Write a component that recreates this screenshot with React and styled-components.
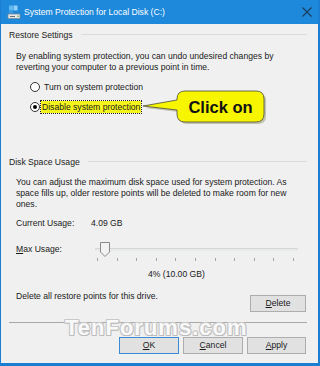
import React from 'react';
import styled, { createGlobalStyle } from 'styled-components';

const GlobalStyle = createGlobalStyle`
  html, body {
    margin: 0;
    padding: 0;
    background: #f0f0f0;
  }
  body {
    font-family: "Liberation Sans", Arial, sans-serif;
    font-size: 8.6px;
    color: #1a1a1a;
  }
`;

// WINDOW FRAME
const Window = styled.div`
  position: relative;
  width: 320px;
  height: 366px;
  box-sizing: border-box;
  border-style: solid;
  border-color: #1a7fd0;
  border-width: 0 2px 3px 1px;
  background: #f0f0f0;
  display: flex;
  flex-direction: column;
  overflow: hidden;
`;

const TitleBar = styled.div`
  height: 24px;
  flex: none;
  background: #1e88da;
  display: flex;
  align-items: center;
  padding: 0 6px 0 6px;
  color: #fff;
`;

const TitleText = styled.span`
  margin-left: 3px;
  flex: 1;
  line-height: 12px;
`;

const Body = styled.div`
  flex: 1;
  display: flex;
  flex-direction: column;
  padding: 0 11px 0 8px;
`;

// GROUP BOX HEADERS
const GroupHeader = styled.div`
  display: flex;
  align-items: center;
  gap: 8px;
  margin-top: ${p => p.$top}px;
  line-height: 12px;
  height: 12px;
`;

const Rule = styled.div`
  flex: 1;
  height: 1px;
  background: #dcdcdc;
  margin-top: -1px;
`;

const Para = styled.div`
  margin: ${p => p.$top}px 0 0 7px;
  line-height: 11px;
  white-space: nowrap;
`;

// RADIOS
const RadioRow = styled.div`
  position: relative;
  display: flex;
  align-items: center;
  height: 14px;
  margin: ${p => p.$top}px 0 0 21px;
`;

const RadioCircle = styled.span`
  width: 10px;
  height: 10px;
  box-sizing: border-box;
  border-radius: 50%;
  border: 1px solid #333;
  background: #fff;
  display: flex;
  align-items: center;
  justify-content: center;
  flex: none;

  &::after {
    content: '';
    width: 4px;
    height: 4px;
    border-radius: 50%;
    background: ${p => (p.$checked ? '#000' : 'transparent')};
  }
`;

const RadioLabel = styled.span`
  margin-left: ${p => (p.$focused ? 1 : 3)}px;
  line-height: 12px;
  padding: 0 1px;
  background: ${p => (p.$focused ? '#f4f41c' : 'transparent')};
  outline: ${p => (p.$focused ? '1px dotted #222' : 'none')};
`;

const CalloutSvg = styled.svg`
  position: absolute;
  left: 111px;
  top: -12px;
  overflow: visible;
`;

// USAGE ROWS
const InfoRow = styled.div`
  display: flex;
  align-items: flex-start;
  margin: ${p => p.$top}px 0 0 7px;
  line-height: 12px;
`;

const InfoLabel = styled.span`
  width: 75px;
  flex: none;
  margin-top: ${p => p.$offset || 0}px;
`;

const SliderBox = styled.div`
  position: relative;
  width: 203px;
  height: 22px;
  margin-left: 4px;
`;

const Track = styled.div`
  position: absolute;
  left: 0;
  right: 0;
  top: 7px;
  height: 2px;
  background: #e7eaea;
  border-top: 1px solid #d6d6d6;
`;

const Thumb = styled.svg`
  position: absolute;
  left: 5px;
  top: 1px;
`;

const Ticks = styled.div`
  position: absolute;
  left: 2px;
  right: 4px;
  top: 17px;
  display: flex;
  justify-content: space-between;
`;

const Tick = styled.span`
  width: 1px;
  height: 3px;
  background: #a4a4a4;
`;

const Percent = styled.div`
  margin: 5px 0 0 139px;
  line-height: 12px;
`;

const DeleteRow = styled.div`
  display: flex;
  justify-content: space-between;
  align-items: flex-start;
  margin: 10px 0 0 7px;
  line-height: 12px;
`;

const Button = styled.button`
  font: inherit;
  color: #1a1a1a;
  height: 17px;
  width: ${p => p.$w}px;
  padding: 0;
  box-sizing: border-box;
  background: #e1e1e1;
  border: 1px solid ${p => (p.$primary ? '#3a8ad6' : '#adadad')};
  margin-top: ${p => p.$top || 0}px;
  margin-right: ${p => p.$right || 0}px;
  line-height: 15px;
`;

const Separator = styled.div`
  height: 1px;
  background: #a8a8a8;
  margin-top: 10px;
`;

const ButtonBar = styled.div`
  display: flex;
  justify-content: flex-end;
  gap: 4px;
  margin-top: 14px;
  padding-right: 1px;
`;

const Watermark = styled.div`
  position: absolute;
  left: 64px;
  top: 316px;
  font-family: "Liberation Sans", Arial, sans-serif;
  font-weight: bold;
  font-size: 22px;
  letter-spacing: 1px;
  line-height: 24px;
  color: #f9f9f9;
  text-shadow: 1px 0 #c2c2c2, -1px 0 #c8c8c8, 0 1px #bcbcbc, 0 -1px #c8c8c8,
    1px 1px #b8b8b8, -1px -1px #cccccc, 1px -1px #c8c8c8, -1px 1px #c8c8c8;
  pointer-events: none;
`;

const DiskIcon = () => (
  <svg width="14" height="14" viewBox="0 0 14 14">
    <rect x="2" y="0.5" width="4" height="5" fill="#5fb8f0" />
    <rect x="6.5" y="0.5" width="4" height="5" fill="#8fd0f8" />
    <rect x="2" y="6" width="4" height="2.5" fill="#3a9de6" />
    <rect x="1" y="9" width="12" height="4.5" rx="0.5" fill="#e8e8e8" stroke="#7a8a98" strokeWidth="0.8" />
    <rect x="3" y="11" width="5" height="1" fill="#5d7080" />
    <circle cx="11" cy="11.3" r="0.8" fill="#4caf50" />
  </svg>
);

const CloseIcon = () => (
  <svg width="10" height="10" viewBox="0 0 10 10">
    <path d="M0.5 0.5 L9.5 9.5 M9.5 0.5 L0.5 9.5" stroke="#1b3b5a" strokeWidth="1.1" fill="none" />
  </svg>
);

const Callout = () => (
  <CalloutSvg width="124" height="38" viewBox="0 0 124 38">
    <path
      d="M46 5 H117 Q125 5 125 13 V28 Q125 36 117 36 H46 Q38 36 38 28 V24 L4 20 L38 14 V13 Q38 5 46 5 Z"
      fill="#8a8a5a"
      opacity="0.45"
    />
    <path
      d="M44 3 H115 Q123 3 123 11 V26 Q123 34 115 34 H44 Q36 34 36 26 V22 L2 18 L36 12 V11 Q36 3 44 3 Z"
      fill="#f7f500"
      stroke="#4a4a3a"
      strokeWidth="0.8"
    />
    <text
      x="79.5"
      y="24.5"
      textAnchor="middle"
      fontFamily='"Liberation Sans", Arial, sans-serif'
      fontWeight="bold"
      fontSize="16.5"
      fill="#111"
    >
      Click on
    </text>
  </CalloutSvg>
);

const App = () => (
  <>
    <GlobalStyle />
    <Window>
      <TitleBar>
        <DiskIcon />
        <TitleText>System Protection for Local Disk (C:)</TitleText>
        <CloseIcon />
      </TitleBar>
      <Body>
        <GroupHeader $top={5}>
          <span>Restore Settings</span>
          <Rule />
        </GroupHeader>
        <Para $top={10}>
          By enabling system protection, you can undo undesired changes by
          <br />
          reverting your computer to a previous point in time.
        </Para>
        <RadioRow $top={7}>
          <RadioCircle />
          <RadioLabel>Turn on system protection</RadioLabel>
        </RadioRow>
        <RadioRow $top={6}>
          <RadioCircle $checked />
          <RadioLabel $focused>Disable system protection</RadioLabel>
          <Callout />
        </RadioRow>

        <GroupHeader $top={42}>
          <span>Disk Space Usage</span>
          <Rule />
        </GroupHeader>
        <Para $top={9}>
          You can adjust the maximum disk space used for system protection. As
          <br />
          space fills up, older restore points will be deleted to make room for new
          <br />
          ones.
        </Para>
        <InfoRow $top={7}>
          <InfoLabel>Current Usage:</InfoLabel>
          <span>4.09 GB</span>
        </InfoRow>
        <InfoRow $top={12}>
          <InfoLabel $offset={2}>
            <u>M</u>ax Usage:
          </InfoLabel>
          <SliderBox>
            <Track />
            <Thumb width="10" height="15" viewBox="0 0 10 15">
              <path d="M0.5 0.5 H9.5 V10 L5 14.5 L0.5 10 Z" fill="#f2f2f2" stroke="#8a8a8a" strokeWidth="1" />
            </Thumb>
            <Ticks>
              {Array.from({ length: 11 }).map((_, i) => (
                <Tick key={i} />
              ))}
            </Ticks>
          </SliderBox>
        </InfoRow>
        <Percent>4% (10.00 GB)</Percent>
        <DeleteRow>
          <span>Delete all restore points for this drive.</span>
          <Button $w={56} $top={5} $right={1}>
            <u>D</u>elete
          </Button>
        </DeleteRow>
        <Separator />
        <ButtonBar>
          <Button $w={60} $primary>
            <u>O</u>K
          </Button>
          <Button $w={60}>
            <u>C</u>ancel
          </Button>
          <Button $w={59}>
            <u>A</u>pply
          </Button>
        </ButtonBar>
      </Body>
      <Watermark>TenForums.com</Watermark>
    </Window>
  </>
);

export default App;
